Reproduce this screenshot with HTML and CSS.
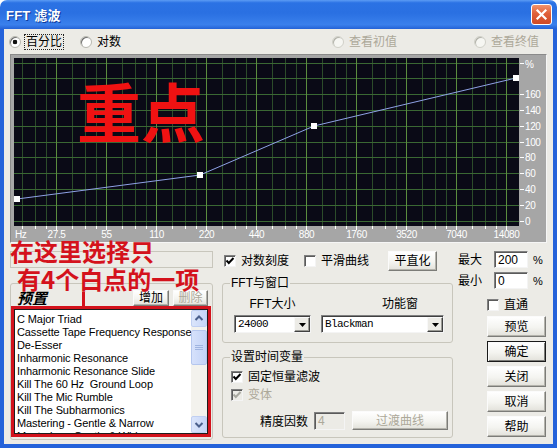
FILE: index.html
```html
<!DOCTYPE html>
<html lang="zh-CN">
<head>
<meta charset="utf-8">
<title>FFT 滤波</title>
<link rel="stylesheet" href="styles.css">
</head>
<body>
<div class="window">
  <div class="titlebar">
    <span class="title">FFT 滤波</span>
    <span class="close"><svg width="19" height="19" viewBox="0 0 19 19"><path d="M5.5 5.5L13.5 13.5M13.5 5.5L5.5 13.5" stroke="#fff" stroke-width="2.2" stroke-linecap="square"/></svg></span>
  </div>
  <div class="frame">
    <div class="radio-row">
      <span class="radio r1"><span class="rb on"></span><span class="focus">百分比</span></span>
      <span class="radio r2"><span class="rb"></span>对数</span>
      <span class="radio r3 disabled"><span class="rb"></span>查看初值</span>
      <span class="radio r4 disabled"><span class="rb"></span>查看终值</span>
    </div>

    <div class="graph">
      <svg class="plot" width="535" height="187" viewBox="0 0 535 187">
        <rect x="3" y="3" width="505" height="168" fill="#0a0a16"/>
        <path class="minor" d="M11.5 3V171M24.5 3V171M35.5 3V171M61.5 3V171M74.5 3V171M85.5 3V171M111.5 3V171M124.5 3V171M135.5 3V171M161.5 3V171M174.5 3V171M185.5 3V171M211.5 3V171M224.5 3V171M235.5 3V171M261.5 3V171M274.5 3V171M285.5 3V171M311.5 3V171M324.5 3V171M335.5 3V171M361.5 3V171M374.5 3V171M385.5 3V171M411.5 3V171M424.5 3V171M435.5 3V171M461.5 3V171M474.5 3V171M485.5 3V171"/>
        <path class="hline" d="M3 8.5H508M3 23.5H508M3 39.5H508M3 55.5H508M3 71.5H508M3 87.5H508M3 102.5H508M3 118.5H508M3 134.5H508M3 150.5H508M3 166.5H508"/>
        <path class="major" d="M45.5 3V171M95.5 3V171M145.5 3V171M195.5 3V171M245.5 3V171M295.5 3V171M345.5 3V171M395.5 3V171M445.5 3V171M495.5 3V171"/>
        <path class="tick" d="M11.5 171V174M24.5 171V174M35.5 171V174M45.5 171V175M61.5 171V174M74.5 171V174M85.5 171V174M95.5 171V175M111.5 171V174M124.5 171V174M135.5 171V174M145.5 171V175M161.5 171V174M174.5 171V174M185.5 171V174M195.5 171V175M211.5 171V174M224.5 171V174M235.5 171V174M245.5 171V175M261.5 171V174M274.5 171V174M285.5 171V174M295.5 171V175M311.5 171V174M324.5 171V174M335.5 171V174M345.5 171V175M361.5 171V174M374.5 171V174M385.5 171V174M395.5 171V175M411.5 171V174M424.5 171V174M435.5 171V174M445.5 171V175M461.5 171V174M474.5 171V174M485.5 171V174M495.5 171V175M509 8.5H513M509 39.5H513M509 55.5H513M509 71.5H513M509 87.5H513M509 102.5H513M509 118.5H513M509 134.5H513M509 150.5H513M509 166.5H513"/>
        <polyline class="curve" points="6,144 189,120 303,71 505,23"/>
        <rect class="pt" x="3" y="141" width="6" height="6"/>
        <rect class="pt" x="186" y="117" width="6" height="6"/>
        <rect class="pt" x="300" y="68" width="6" height="6"/>
        <rect class="pt" x="502" y="20" width="6" height="6"/>
        <g class="xl">
          <text x="4" y="183">Hz</text>
          <text x="45.5" y="183" text-anchor="middle">27.5</text>
          <text x="95.5" y="183" text-anchor="middle">55</text>
          <text x="145.5" y="183" text-anchor="middle">110</text>
          <text x="195.5" y="183" text-anchor="middle">220</text>
          <text x="245.5" y="183" text-anchor="middle">440</text>
          <text x="295.5" y="183" text-anchor="middle">880</text>
          <text x="345.5" y="183" text-anchor="middle">1760</text>
          <text x="395.5" y="183" text-anchor="middle">3520</text>
          <text x="445.5" y="183" text-anchor="middle">7040</text>
          <text x="495.5" y="183" text-anchor="middle">14080</text>
        </g>
        <g class="yl">
          <text x="514" y="13">%</text>
          <text x="514" y="43">160</text>
          <text x="514" y="59">140</text>
          <text x="514" y="75">120</text>
          <text x="514" y="91">100</text>
          <text x="514" y="106">80</text>
          <text x="514" y="122">60</text>
          <text x="514" y="138">40</text>
          <text x="514" y="154">20</text>
          <text x="514" y="170">0</text>
        </g>
      </svg>
      <div class="stamp">重点</div>
    </div>

    <div class="lower">
      <div class="left-col">
        <div class="namebox"></div>
        <div class="preset-group">
          <div class="preset-head">
            <span class="preset-title">预置</span>
            <span class="btn small add">增加</span>
            <span class="btn small del disabled">删除</span>
          </div>
          <div class="red-frame">
            <div class="list">
              <div class="items">
                <div>C Major Triad</div>
                <div>Cassette Tape Frequency Response</div>
                <div>De-Esser</div>
                <div>Inharmonic Resonance</div>
                <div>Inharmonic Resonance Slide</div>
                <div>Kill The 60 Hz&nbsp; Ground Loop</div>
                <div>Kill The Mic Rumble</div>
                <div>Kill The Subharmonics</div>
                <div>Mastering - Gentle &amp; Narrow</div>
                <div>Mastering - Gentle &amp; Wide</div>
              </div>
              <div class="sb">
                <span class="sb-btn"><svg width="14" height="15" viewBox="0 0 14 15"><path d="M3.5 9L7 5.5L10.5 9" fill="none" stroke="#4a5f8c" stroke-width="2"/></svg></span>
                <span class="sb-thumb"><svg width="8" height="7" viewBox="0 0 8 7"><path d="M0 1.5H8M0 3.5H8M0 5.5H8" stroke="#9fb4e0" stroke-width="1"/></svg></span>
                <span class="sb-track"></span>
                <span class="sb-btn"><svg width="14" height="15" viewBox="0 0 14 15"><path d="M3.5 6L7 9.5L10.5 6" fill="none" stroke="#4a5f8c" stroke-width="2"/></svg></span>
              </div>
            </div>
          </div>
        </div>
        <div class="note n1">在这里选择只</div>
        <div class="note n2">有4个白点的一项</div>
        <div class="pointer"></div>
      </div>

      <div class="mid-col">
        <div class="opts-row">
          <span class="check c1"><span class="cb"><svg width="10" height="10" viewBox="0 0 10 10"><path d="M1.5 4.5L3.8 7L8.5 2" fill="none" stroke="#000" stroke-width="2"/></svg></span>对数刻度</span>
          <span class="check c2"><span class="cb"></span>平滑曲线</span>
          <span class="btn flat">平直化</span>
        </div>
        <div class="group g1">
          <div class="legend">FFT与窗口</div>
          <div class="g1-labels"><span class="lbl-size">FFT大小</span><span class="lbl-win">功能窗</span></div>
          <div class="g1-combos">
            <div class="combo size"><span class="val">24000</span><span class="arrow"><svg width="7" height="4" viewBox="0 0 7 4"><path d="M0 0H7L3.5 4Z" fill="#000"/></svg></span></div>
            <div class="combo win"><span class="val">Blackman</span><span class="arrow"><svg width="7" height="4" viewBox="0 0 7 4"><path d="M0 0H7L3.5 4Z" fill="#000"/></svg></span></div>
          </div>
        </div>
        <div class="group g2">
          <div class="legend">设置时间变量</div>
          <span class="check row1"><span class="cb"><svg width="10" height="10" viewBox="0 0 10 10"><path d="M1.5 4.5L3.8 7L8.5 2" fill="none" stroke="#000" stroke-width="2"/></svg></span>固定恒量滤波</span>
          <span class="check row2 disabled"><span class="cb dis"><svg width="10" height="10" viewBox="0 0 10 10"><path d="M1.5 4.5L3.8 7L8.5 2" fill="none" stroke="#a8a8a0" stroke-width="2"/></svg></span>变体</span>
          <div class="prec-row"><span>精度因数</span><span class="field dis">4</span><span class="btn disabled trans">过渡曲线</span></div>
        </div>
      </div>

      <div class="right-col">
        <div class="range-row first"><span class="rl">最大</span><span class="field num">200</span><span class="pct">%</span></div>
        <div class="range-row second"><span class="rl">最小</span><span class="field num">0</span><span class="pct">%</span></div>
        <span class="check bypass"><span class="cb"></span>直通</span>
        <span class="btn side">预览</span>
        <span class="btn side default">确定</span>
        <span class="btn side">关闭</span>
        <span class="btn side">取消</span>
        <span class="btn side">帮助</span>
      </div>
    </div>
  </div>
</div>
</body>
</html>
```

FILE: styles.css
```css
* { box-sizing: border-box; }
html, body { margin: 0; padding: 0; }
body {
  width: 557px;
  height: 448px;
  overflow: hidden;
  background: #ffffff;
  font-family: "Liberation Sans", "Noto Sans CJK SC", sans-serif;
  font-size: 12px;
  color: #000;
}
.window {
  width: 557px;
  height: 448px;
  display: flex;
  flex-direction: column;
  border-radius: 7px 7px 0 0;
  overflow: hidden;
}
.titlebar {
  height: 29px;
  flex: none;
  display: flex;
  align-items: center;
  padding: 0 5px 0 6px;
  background: linear-gradient(to bottom, #5c9cf4 0%, #2b72e4 10%, #2a70e2 45%, #3a80ec 85%, #2462d6 100%);
}
.title {
  color: #fff;
  font-weight: bold;
  font-size: 13px;
  text-shadow: 1px 1px 0 #0e3a9a;
  letter-spacing: 0.2px;
}
.close {
  margin-left: auto;
  width: 21px;
  height: 21px;
  border: 1px solid #fff;
  border-radius: 3px;
  background: linear-gradient(to bottom, #f0936c 0%, #e0603a 45%, #cf4a26 100%);
  display: flex;
  align-items: center;
  justify-content: center;
}
.frame {
  flex: 1;
  display: flex;
  flex-direction: column;
  border: 4px solid #2462da;
  border-top: 0;
  background: #ecebe6;
  padding: 0 6px;
}

/* radios */
.radio-row {
  height: 25px;
  flex: none;
  display: flex;
  align-items: center;
}
.radio {
  display: flex;
  align-items: center;
  gap: 5px;
  line-height: 14px;
  white-space: nowrap;
}
.rb {
  width: 12px;
  height: 12px;
  flex: none;
  border-radius: 50%;
  background: #fff;
  border: 1px solid #b8b8b0;
  box-shadow: inset 1px 1px 0 #6e6e6e;
}
.rb.on { background: radial-gradient(circle at 50% 50%, #111 0 2px, #fff 2.6px); }
.r1 { margin-left: -1px; }
.r1 .focus { margin-left: -2px; padding: 0 1px; border: 1px dotted #222; }
.r2 { margin-left: 16px; }
.r3 { margin-left: auto; }
.r4 { margin-left: 77px; margin-right: 8px; }
.disabled { color: #aca899; }
.radio.disabled .rb { border-color: #d0d0c8; box-shadow: inset 1px 1px 0 #b0b0a8; background: #f6f6f2; }

/* graph */
.graph {
  height: 189px;
  flex: none;
  position: relative;
  background: #a6a6a6;
  border: 1px solid;
  border-color: #8a8a8a #f6f6f6 #f6f6f6 #8a8a8a;
}
.plot { display: block; }
.plot .minor { stroke: #2c4c2a; stroke-width: 1; fill: none; }
.plot .hline { stroke: #3a6833; stroke-width: 1; fill: none; }
.plot .major { stroke: #5a8c3e; stroke-width: 1; fill: none; }
.plot .tick { stroke: #ffffff; stroke-width: 1; fill: none; }
.plot .curve { stroke: #8fa2e6; stroke-width: 1; fill: none; }
.plot .pt { fill: #ffffff; }
.plot text {
  fill: #ffffff;
  font-family: "Liberation Sans", sans-serif;
  font-size: 10px;
  letter-spacing: -0.4px;
}
.stamp {
  position: absolute;
  left: 66px;
  top: 22px;
  font-family: "Noto Sans CJK SC", sans-serif;
  font-weight: bold;
  font-size: 64px;
  line-height: 64px;
  color: #f01212;
}

/* lower area */
.lower {
  flex: 1;
  display: flex;
}
.left-col {
  width: 203px;
  position: relative;
}
.mid-col {
  width: 231px;
  margin-left: 9px;
}
.right-col {
  width: 94px;
  display: flex;
  flex-direction: column;
}

/* left column */
.namebox {
  margin-top: 8px;
  height: 17px;
  border: 1px solid #c8c6bc;
}
.preset-group {
  margin-top: 15px;
  height: 157px;
  border: 1px solid #c8c6bc;
  border-radius: 3px;
}
.preset-head {
  display: flex;
  align-items: center;
  height: 22px;
  padding: 6px 4px 0 6px;
}
.preset-title {
  font-family: "Noto Sans CJK SC", sans-serif;
  font-weight: bold;
  font-style: italic;
  font-size: 15px;
  line-height: 16px;
}
.btn {
  display: flex;
  align-items: center;
  justify-content: center;
  white-space: nowrap;
  border: 1px solid;
  border-color: #fbfbfb #7c7c78 #7c7c78 #fbfbfb;
  box-shadow: inset -1px -1px 0 #b4b3ac;
  background: linear-gradient(to bottom, #ffffff 0%, #f4f4f0 55%, #e2e1da 100%);
  line-height: 14px;
}
.btn.small { height: 16px; }
.btn.add { margin-left: auto; width: 36px; }
.btn.del { margin-left: 4px; width: 35px; }
.btn.disabled { color: #aca899; }
.red-frame {
  width: 200px;
  height: 131px;
  border: 3px solid #d3121c;
}
.list {
  height: 125px;
  border: 1px solid #1e1e1e;
  background: #fff;
  display: flex;
}
.items {
  flex: 1;
  min-width: 0;
  overflow: hidden;
  padding: 3px 0 0 2px;
  line-height: 13px;
  white-space: nowrap;
  font-size: 11px;
  letter-spacing: -0.1px;
}
.sb {
  width: 16px;
  flex: none;
  display: flex;
  flex-direction: column;
  background: #f3f2ed;
}
.sb-btn {
  height: 17px;
  display: flex;
  align-items: center;
  justify-content: center;
  border: 1px solid #c0cff2;
  border-radius: 2px;
  background: linear-gradient(to right, #dbe5fb, #c6d5f7);
}
.sb-thumb {
  margin-top: 3px;
  height: 35px;
  display: flex;
  align-items: center;
  justify-content: center;
  border: 1px solid #b4c6ee;
  border-radius: 2px;
  background: linear-gradient(to right, #d6e1fb, #c3d3f7);
}
.sb-track { flex: 1; }
.note {
  position: absolute;
  font-family: "Noto Sans CJK SC", sans-serif;
  font-weight: bold;
  font-size: 24px;
  line-height: 20px;
  color: #d4121c;
  white-space: nowrap;
}
.n1 { left: 0; top: -2px; }
.n2 { left: 7px; top: 26px; }
.pointer {
  position: absolute;
  left: 72px;
  top: 49px;
  width: 3px;
  height: 15px;
  background: #d4121c;
}

/* checkboxes */
.check {
  display: flex;
  align-items: center;
  gap: 5px;
  height: 14px;
  line-height: 14px;
  white-space: nowrap;
}
.cb {
  width: 12px;
  height: 12px;
  flex: none;
  display: flex;
  align-items: center;
  justify-content: center;
  background: #fff;
  border: 1px solid;
  border-color: #808080 #f4f4f4 #f4f4f4 #808080;
  box-shadow: inset 1px 1px 0 #5a5a5a;
}
.cb.dis { background: #ecebe6; }

/* middle column */
.opts-row {
  margin-top: 8px;
  height: 20px;
  display: flex;
  align-items: center;
}
.c1 { margin-left: 2px; }
.c2 { margin-left: 15px; }
.btn.flat { margin-left: 19px; width: 49px; height: 20px; }
.group {
  border: 1px solid #c8c6bc;
  border-radius: 3px;
}
.legend {
  width: fit-content;
  margin: -8px 0 0 7px;
  padding: 0 1px;
  height: 14px;
  line-height: 14px;
  background: #ecebe6;
}
.g1 { margin-top: 12px; padding-bottom: 9px; }
.g1-labels {
  display: flex;
  margin-top: 7px;
  height: 14px;
  line-height: 14px;
}
.lbl-size { width: 77px; margin-left: 11px; text-align: center; }
.lbl-win { margin-left: 10px; padding-left: 61px; }
.g1-combos { display: flex; margin-top: 4px; }
.combo {
  height: 18px;
  display: flex;
  background: #fff;
  border: 1px solid;
  border-color: #808080 #f4f4f4 #f4f4f4 #808080;
  box-shadow: inset 1px 1px 0 #404040;
}
.combo.size { margin-left: 11px; width: 77px; }
.combo.win { margin-left: 10px; width: 123px; }
.combo .val {
  flex: 1;
  padding: 1px 0 0 3px;
  font-family: "Liberation Mono", monospace;
  font-size: 11px;
  letter-spacing: -0.6px;
  line-height: 15px;
}
.combo .arrow {
  width: 16px;
  margin: 1px 0 0 0;
  display: flex;
  align-items: center;
  justify-content: center;
  background: #ecebe6;
  border: 1px solid;
  border-color: #f8f8f8 #404040 #404040 #f8f8f8;
  box-shadow: inset -1px -1px 0 #9a9a94;
}
.g2 { margin-top: 14px; padding-bottom: 7px; }
.g2 .row1 { margin: 6px 0 0 8px; }
.g2 .row2 { margin: 4px 0 0 8px; }
.prec-row {
  display: flex;
  align-items: center;
  margin-top: 9px;
  padding-left: 37px;
  height: 19px;
}
.field {
  display: flex;
  align-items: center;
  height: 18px;
  padding: 1px 0 0 3px;
  background: #fff;
  border: 1px solid;
  border-color: #808080 #f4f4f4 #f4f4f4 #808080;
  box-shadow: inset 1px 1px 0 #5a5a5a;
  font-size: 12px;
}
.field.dis { background: #ecebe6; color: #aca899; width: 31px; margin-left: 6px; }
.btn.trans { width: 96px; height: 19px; margin-left: 7px; }

/* right column */
.range-row {
  display: flex;
  align-items: center;
  height: 17px;
  padding-left: 5px;
}
.range-row.first { margin-top: 8px; }
.range-row.second { margin-top: 4px; }
.rl { width: 24px; line-height: 14px; }
.field.num { width: 34px; height: 17px; margin-left: 12px; }
.pct { margin-left: 5px; font-size: 11px; }
.bypass { margin: 9px 0 0 34px; }
.btn.side {
  width: 59px;
  height: 21px;
  margin: 4px 0 0 34px;
  flex: none;
}
.btn.default {
  border-color: #1a1a1a;
  box-shadow: inset 1px 1px 0 #fbfbfb, inset -1px -1px 0 #7c7c78;
}
```
